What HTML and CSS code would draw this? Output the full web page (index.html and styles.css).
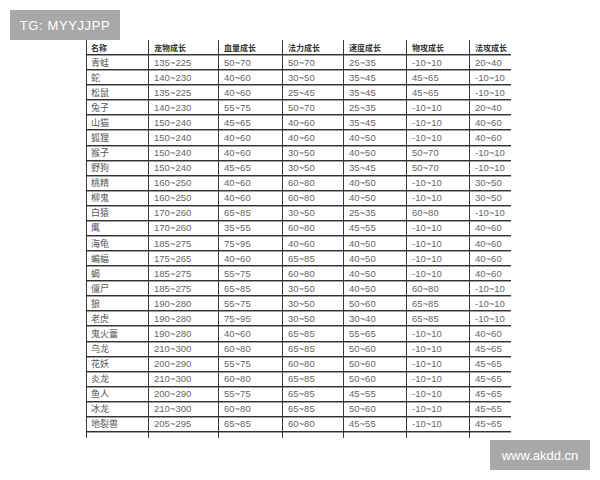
FILE: index.html
```html
<!DOCTYPE html>
<html lang="zh">
<head>
<meta charset="utf-8">
<title>宠物成长</title>
<link rel="stylesheet" href="styles.css">
</head>
<body>
<div class="page">
  <div class="table">
    <div class="row head"><div class="c n">名称</div><div class="c">宠物成长</div><div class="c">血量成长</div><div class="c">法力成长</div><div class="c">速度成长</div><div class="c">物攻成长</div><div class="c">法攻成长</div></div>
    <div class="row"><div class="c n">青蛙</div><div class="c">135~225</div><div class="c">50~70</div><div class="c">50~70</div><div class="c">25~35</div><div class="c">-10~10</div><div class="c">20~40</div></div>
    <div class="row"><div class="c n">蛇</div><div class="c">140~230</div><div class="c">40~60</div><div class="c">30~50</div><div class="c">35~45</div><div class="c">45~65</div><div class="c">-10~10</div></div>
    <div class="row"><div class="c n">松鼠</div><div class="c">135~225</div><div class="c">40~60</div><div class="c">25~45</div><div class="c">35~45</div><div class="c">45~65</div><div class="c">-10~10</div></div>
    <div class="row"><div class="c n">兔子</div><div class="c">140~230</div><div class="c">55~75</div><div class="c">50~70</div><div class="c">25~35</div><div class="c">-10~10</div><div class="c">20~40</div></div>
    <div class="row"><div class="c n">山猫</div><div class="c">150~240</div><div class="c">45~65</div><div class="c">40~60</div><div class="c">35~45</div><div class="c">-10~10</div><div class="c">40~60</div></div>
    <div class="row"><div class="c n">狐狸</div><div class="c">150~240</div><div class="c">40~60</div><div class="c">40~60</div><div class="c">40~50</div><div class="c">-10~10</div><div class="c">40~60</div></div>
    <div class="row"><div class="c n">猴子</div><div class="c">150~240</div><div class="c">40~60</div><div class="c">30~50</div><div class="c">40~50</div><div class="c">50~70</div><div class="c">-10~10</div></div>
    <div class="row"><div class="c n">野狗</div><div class="c">150~240</div><div class="c">45~65</div><div class="c">30~50</div><div class="c">35~45</div><div class="c">50~70</div><div class="c">-10~10</div></div>
    <div class="row"><div class="c n">桃精</div><div class="c">160~250</div><div class="c">40~60</div><div class="c">60~80</div><div class="c">40~50</div><div class="c">-10~10</div><div class="c">30~50</div></div>
    <div class="row"><div class="c n">柳鬼</div><div class="c">160~250</div><div class="c">40~60</div><div class="c">60~80</div><div class="c">40~50</div><div class="c">-10~10</div><div class="c">30~50</div></div>
    <div class="row"><div class="c n">白猿</div><div class="c">170~260</div><div class="c">65~85</div><div class="c">30~50</div><div class="c">25~35</div><div class="c">60~80</div><div class="c">-10~10</div></div>
    <div class="row"><div class="c n">鹰</div><div class="c">170~260</div><div class="c">35~55</div><div class="c">60~80</div><div class="c">45~55</div><div class="c">-10~10</div><div class="c">40~60</div></div>
    <div class="row"><div class="c n">海龟</div><div class="c">185~275</div><div class="c">75~95</div><div class="c">40~60</div><div class="c">40~50</div><div class="c">-10~10</div><div class="c">40~60</div></div>
    <div class="row"><div class="c n">蝙蝠</div><div class="c">175~265</div><div class="c">40~60</div><div class="c">65~85</div><div class="c">40~50</div><div class="c">-10~10</div><div class="c">40~60</div></div>
    <div class="row"><div class="c n">蝎</div><div class="c">185~275</div><div class="c">55~75</div><div class="c">60~80</div><div class="c">40~50</div><div class="c">-10~10</div><div class="c">40~60</div></div>
    <div class="row"><div class="c n">僵尸</div><div class="c">185~275</div><div class="c">65~85</div><div class="c">30~50</div><div class="c">40~50</div><div class="c">60~80</div><div class="c">-10~10</div></div>
    <div class="row"><div class="c n">狼</div><div class="c">190~280</div><div class="c">55~75</div><div class="c">30~50</div><div class="c">50~60</div><div class="c">65~85</div><div class="c">-10~10</div></div>
    <div class="row"><div class="c n">老虎</div><div class="c">190~280</div><div class="c">75~95</div><div class="c">30~50</div><div class="c">30~40</div><div class="c">65~85</div><div class="c">-10~10</div></div>
    <div class="row"><div class="c n">鬼火蕾</div><div class="c">190~280</div><div class="c">40~60</div><div class="c">65~85</div><div class="c">55~65</div><div class="c">-10~10</div><div class="c">40~60</div></div>
    <div class="row"><div class="c n">乌龙</div><div class="c">210~300</div><div class="c">60~80</div><div class="c">65~85</div><div class="c">50~60</div><div class="c">-10~10</div><div class="c">45~65</div></div>
    <div class="row"><div class="c n">花妖</div><div class="c">200~290</div><div class="c">55~75</div><div class="c">60~80</div><div class="c">50~60</div><div class="c">-10~10</div><div class="c">45~65</div></div>
    <div class="row"><div class="c n">炎龙</div><div class="c">210~300</div><div class="c">60~80</div><div class="c">65~85</div><div class="c">50~60</div><div class="c">-10~10</div><div class="c">45~65</div></div>
    <div class="row"><div class="c n">鱼人</div><div class="c">200~290</div><div class="c">55~75</div><div class="c">65~85</div><div class="c">45~55</div><div class="c">-10~10</div><div class="c">45~65</div></div>
    <div class="row"><div class="c n">冰龙</div><div class="c">210~300</div><div class="c">60~80</div><div class="c">65~85</div><div class="c">50~60</div><div class="c">-10~10</div><div class="c">45~65</div></div>
    <div class="row"><div class="c n">地裂兽</div><div class="c">205~295</div><div class="c">65~85</div><div class="c">60~80</div><div class="c">45~55</div><div class="c">-10~10</div><div class="c">45~65</div></div>
    <div class="row stub"><div class="c"></div><div class="c"></div><div class="c"></div><div class="c"></div><div class="c"></div><div class="c"></div><div class="c"></div></div>
  </div>
  <div class="mark mark-tg">TG: MYYJJPP</div>
  <div class="mark mark-site">www.akdd.cn</div>
</div>
</body>
</html>
```
FILE: styles.css
```css
html, body {
  margin: 0;
  padding: 0;
  background: #ffffff;
}
.page {
  position: relative;
  width: 600px;
  height: 480px;
  overflow: hidden;
  padding-top: 40px;
  box-sizing: border-box;
}
.table {
  margin-left: 86px;
  width: 425px;
  font-family: "Liberation Sans", "Noto Sans CJK SC", sans-serif;
  font-size: 9.5px;
  color: #666666;
}
.row {
  display: grid;
  grid-template-columns: 62px 70px 64px 61px 63px 63px 42px;
  height: 15.08px;
  box-sizing: border-box;
  border-bottom: 1px solid #333333;
  box-shadow: 0 1px 0 #a0a0a0;
}
.row.stub {
  height: 6px;
  border-bottom: none;
  box-shadow: none;
}
.c {
  border-left: 1px solid #3a3a3a;
  padding-left: 5px;
  display: flex;
  align-items: center;
  white-space: nowrap;
  overflow: hidden;
}
.c.n {
  padding-left: 4px;
  font-family: "Noto Sans CJK SC", sans-serif;
  font-size: 9px;
  color: #555555;
}
.head .c {
  font-family: "Noto Sans CJK SC", sans-serif;
  font-size: 8px;
  font-weight: bold;
  color: #333333;
}
.mark {
  position: absolute;
  background: #a8a8a8;
  color: #ffffff;
  font-family: "Liberation Sans", sans-serif;
  display: flex;
  align-items: center;
  justify-content: center;
  height: 30px;
}
.mark-tg {
  left: 10px;
  top: 10px;
  width: 110px;
  font-size: 13px;
  letter-spacing: 0.6px;
}
.mark-site {
  left: 490px;
  top: 440px;
  width: 100px;
  font-size: 13px;
}
```
